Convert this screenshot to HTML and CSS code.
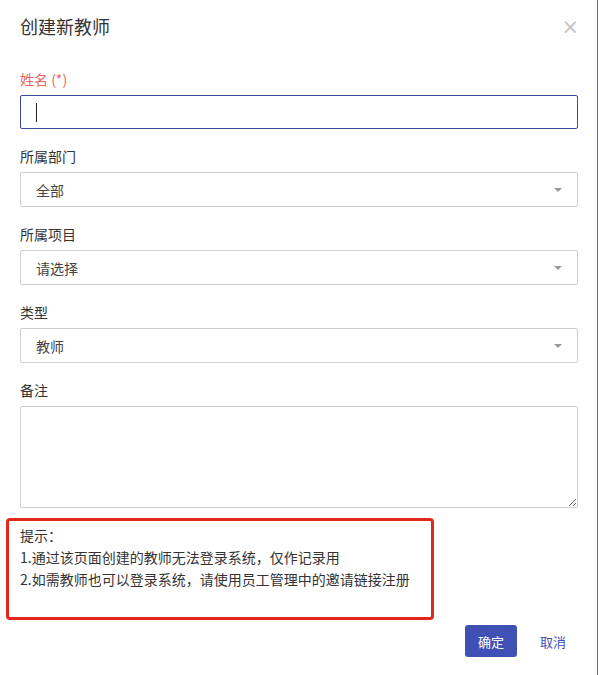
FILE: index.html
```html
<!DOCTYPE html>
<html lang="zh-CN">
<head>
<meta charset="utf-8">
<title>创建新教师</title>
<link rel="stylesheet" href="styles.css">
</head>
<body>
<div class="modal">
  <div class="modal-header">
    <h1 class="modal-title">创建新教师</h1>
    <span class="close">&times;</span>
  </div>
  <div class="modal-body">
    <div class="group">
      <label class="label required">姓名 (*)</label>
      <div class="input focused"><span class="caret"></span></div>
    </div>
    <div class="group">
      <label class="label">所属部门</label>
      <div class="select"><span>全部</span><i class="arrow"></i></div>
    </div>
    <div class="group">
      <label class="label">所属项目</label>
      <div class="select"><span>请选择</span><i class="arrow"></i></div>
    </div>
    <div class="group">
      <label class="label">类型</label>
      <div class="select"><span>教师</span><i class="arrow"></i></div>
    </div>
    <div class="group last">
      <label class="label">备注</label>
      <textarea class="textarea"></textarea>
    </div>
    <div class="hint">
      <p>提示：</p>
      <p>1.通过该页面创建的教师无法登录系统，仅作记录用</p>
      <p>2.如需教师也可以登录系统，请使用员工管理中的邀请链接注册</p>
    </div>
  </div>
  <div class="modal-footer">
    <button class="btn btn-primary">确定</button>
    <button class="btn btn-link">取消</button>
  </div>
</div>
</body>
</html>
```
FILE: styles.css
```css
* { box-sizing: border-box; }
html, body {
  margin: 0;
  padding: 0;
  background: #fff;
}
body {
  font-family: "Microsoft YaHei", "Noto Sans CJK SC", "Noto Sans", sans-serif;
  color: #333;
  font-size: 14px;
}
.modal {
  width: 598px;
  min-height: 675px;
  border-right: 1px solid #6f6f6f;
  background: #fff;
}
.modal-header {
  height: 52px;
  display: flex;
  align-items: center;
  justify-content: space-between;
  padding: 0 18px 0 20px;
}
.modal-title {
  margin: 0;
  font-size: 18px;
  font-weight: normal;
  color: #333;
  line-height: 24px;
}
.close {
  font-family: "DejaVu Sans", sans-serif;
  font-size: 21px;
  color: #c4c4c4;
  line-height: 20px;
  margin-top: 2px;
}
.modal-body {
  padding: 17px 19px 0 20px;
}
.group {
  margin-bottom: 17px;
}
.group.last { margin-bottom: 0; }
.label {
  display: block;
  line-height: 20px;
  margin-bottom: 6px;
  color: #333;
}
.label.required { color: #e5665e; }
.input {
  height: 34px;
  border: 1px solid #3b4a9e;
  border-radius: 2px;
  padding: 0 15px;
  display: flex;
  align-items: center;
}
.caret {
  display: inline-block;
  width: 1px;
  height: 19px;
  background: #222;
}
.select {
  height: 35px;
  border: 1px solid #cfcfcf;
  border-radius: 2px;
  padding: 0 15px;
  display: flex;
  align-items: center;
  justify-content: space-between;
  color: #444;
}
.arrow {
  width: 0;
  height: 0;
  border-left: 4px solid transparent;
  border-right: 4px solid transparent;
  border-top: 4px solid #9a9a9a;
}
.textarea {
  display: block;
  width: 100%;
  height: 102px;
  border: 1px solid #cfcfcf;
  border-radius: 2px;
  margin: 0;
  font-family: inherit;
  resize: vertical;
}
.hint {
  margin: 10px 0 0 -14px;
  width: 428px;
  height: 102px;
  border: 3px solid #e3261c;
  border-radius: 4px;
  padding: 3px 11px;
  color: #333;
}
.hint p {
  margin: 0;
  line-height: 22px;
}
.modal-footer {
  display: flex;
  justify-content: flex-end;
  align-items: center;
  padding: 5px 17px 0 20px;
}
.btn {
  font-family: inherit;
  font-size: 13px;
  border: 0;
  height: 32px;
  border-radius: 3px;
  cursor: pointer;
}
.btn-primary {
  width: 52px;
  background: #3f51b5;
  color: #fff;
  margin-right: 9px;
}
.btn-link {
  background: transparent;
  color: #3f51b5;
  padding: 0 14px;
}
```
